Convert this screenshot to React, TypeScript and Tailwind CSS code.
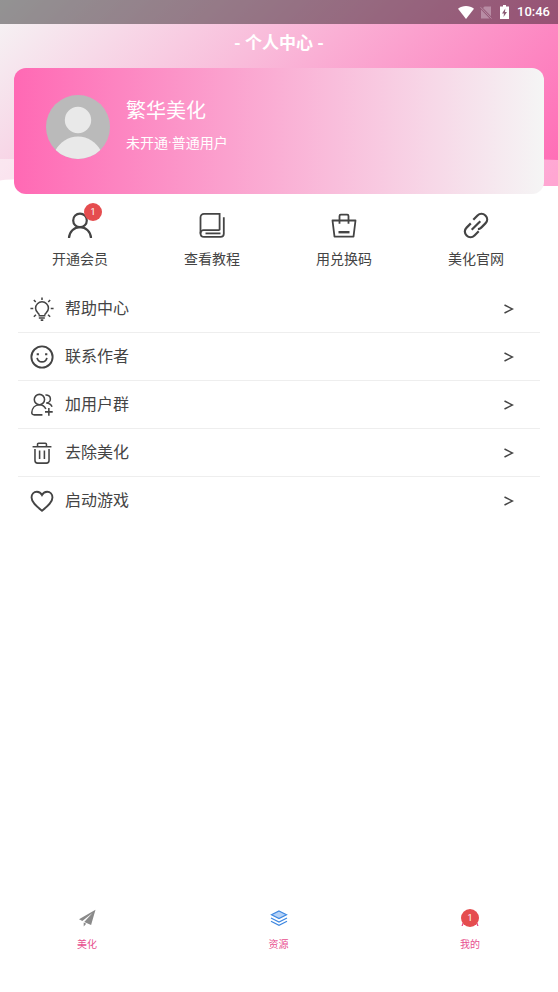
import type { ReactNode } from 'react'

interface IconProps {
  className?: string
  children: ReactNode
}

interface Item {
  label: string
  icon: ReactNode
  badge?: number
}

function LineIcon({ className = 'size-7', children }: IconProps) {
  return (
    <svg
      viewBox="0 0 28 28"
      className={className}
      fill="none"
      stroke="currentColor"
      strokeWidth="1.8"
      aria-hidden="true"
    >
      {children}
    </svg>
  )
}

const SHORTCUTS: Item[] = [
  {
    label: '开通会员',
    badge: 1,
    icon: (
      <LineIcon>
        <circle cx="14" cy="9.4" r="6.8" strokeWidth="2.2" />
        <path d="M3 27c.3-6.200 5-10.800 11-10.800S24.700 20.800 25 27" strokeWidth="2.200" />
      </LineIcon>
    ),
  },
  {
    label: '查看教程',
    icon: (
      <LineIcon>
        <path d="M21.600 19.200V2.900H6a3.500 3.500 0 0 0-3.500 3.500v16" />
        <path d="M21.600 19.200H5.500a3 3 0 0 0-3 3c0 2.200 1.300 3.700 3.500 3.700h16.500c2 0 3.300-1.200 3.300-3.200V6.300" />
        <path d="M7.500 22.400h15" />
      </LineIcon>
    ),
  },
  {
    label: '用兑换码',
    icon: (
      <LineIcon>
        <path d="M2.500 9.500h23l-2 16.100h-19z" strokeLinejoin="round" />
        <path d="M9.500 12.800V5c0-.8.500-1.300 1.300-1.300h6.400c.8 0 1.300.5 1.300 1.300v7.800" />
        <path d="M8.500 21.200h11" strokeWidth="2.400" />
      </LineIcon>
    ),
  },
  {
    label: '美化官网',
    icon: (
      <LineIcon>
        <path
          d="M11.300 8.700l4.200-4.200c2.400-2.400 5.600-2.300 7.900 0 2.300 2.300 2.400 5.500 0 7.900l-4.200 4.200c-1 1-2 1.500-3.300 1.600M16.700 20.300l-4.200 4.200c-2.400 2.400-5.600 2.300-7.900 0-2.300-2.300-2.400-5.500 0-7.900l4.200-4.200M9.700 18.800l8.600-8.600"
          strokeWidth="2.200"
        />
      </LineIcon>
    ),
  },
]

const MENU: Item[] = [
  {
    label: '帮助中心',
    icon: (
      <LineIcon className="size-6">
        <path d="M10.800 20.800c-.3-1.600-4.300-3.300-4.300-7.700a7.500 7.500 0 0 1 15 0c0 4.400-4 6.100-4.300 7.700" />
        <path d="M14 .5v3M4.500 3.500l2.200 2.300M23.500 3.500l-2.200 2.300M.5 13.300h3.300M24.200 13.300h3.300M4.500 23l2.400-2.300M23.500 23l-2.400-2.300" />
        <path d="M10 21.800h8M10.300 24.400h7M12.500 27h3" />
      </LineIcon>
    ),
  },
  {
    label: '联系作者',
    icon: (
      <LineIcon className="size-6">
        <circle cx="14" cy="14" r="12.400" strokeWidth="2.200" />
        <path d="M8.300 15c.6 3 2.800 4.700 5.700 4.700s5.100-1.700 5.700-4.700" strokeWidth="2" />
        <path d="M7.800 10.800h2.600M17.600 10.800h2.600" strokeWidth="2.400" />
      </LineIcon>
    ),
  },
  {
    label: '加用户群',
    icon: (
      <LineIcon className="size-6">
        <circle cx="11" cy="7.600" r="6" />
        <path d="M14.500 25.500h-9.500c-2 0-3-1-2.900-2.700.3-5.200 3.700-9.200 8.900-9.200 3.700 0 6.200 2 7.500 5" />
        <path d="M18 2.300c3.400-.3 5.800 1.800 5.800 4.600 0 2.700-2.200 4.700-4.900 4.800 3.700.3 5.900 1.800 6.800 4.300" />
        <path d="M22 17.500v9M17.500 22h9" />
      </LineIcon>
    ),
  },
  {
    label: '去除美化',
    icon: (
      <LineIcon className="size-6">
        <path d="M3 6.800h22M8.800 6.500V3.900c0-.8.500-1.300 1.300-1.300h7.800c.8 0 1.300.5 1.300 1.300v2.600" />
        <path d="M5.800 9.300v13.500c0 2 1 3 3 3h10.400c2 0 3-1 3-3V9.300M11.200 11v10M16.800 11v10" />
      </LineIcon>
    ),
  },
  {
    label: '启动游戏',
    icon: (
      <LineIcon className="size-6">
        <path
          d="M14 25.300C8 20.500 1.800 15.800 1.800 9.900c0-3.800 2.700-6.700 6.200-6.700 2.600 0 4.800 1.400 6 3.800 1.200-2.400 3.400-3.800 6-3.800 3.500 0 6.200 2.900 6.200 6.700 0 5.900-6.200 10.600-12.200 15.400z"
          strokeWidth="2.200"
        />
      </LineIcon>
    ),
  },
]

const TABS: Item[] = [
  {
    label: '美化',
    icon: (
      <svg viewBox="0 0 18 18" className="size-[18px]" fill="#8a8a8a" aria-hidden="true">
        <path d="M17.500.8L1 10.300l3.300 1.600L14.500 4l-8.300 8.900 6.900 3.100zM5.700 13.600v4l2.500-2.900z" />
      </svg>
    ),
  },
  {
    label: '资源',
    icon: (
      <svg
        viewBox="0 0 18 18"
        className="size-[18px]"
        fill="none"
        stroke="#3d87e0"
        strokeWidth="1.200"
        aria-hidden="true"
      >
        <path d="M9 2l7.500 3.800L9 9.600 1.500 5.800z" fill="#b5d2f7" />
        <path d="M1 9l8 4.100L17 9M1 12.300l8 4.100 8-4.100" />
      </svg>
    ),
  },
  {
    label: '我的',
    badge: 1,
    icon: (
      <svg
        viewBox="0 0 18 18"
        className="size-[18px]"
        fill="none"
        stroke="#e8508f"
        strokeWidth="1.400"
        aria-hidden="true"
      >
        <circle cx="9" cy="6" r="4" />
        <path d="M1.200 17c.4-4 3.600-6.500 7.800-6.500s7.400 2.500 7.800 6.500" />
      </svg>
    ),
  },
]

function Badge({ count, className }: { count: number; className: string }) {
  return (
    <span
      className={`absolute flex size-[18px] items-center justify-center rounded-full bg-[#e54d4f] text-[9px] leading-none text-white ${className}`}
    >
      {count}
    </span>
  )
}

function StatusBar() {
  return (
    <div className="flex h-6 items-center justify-end bg-black/40 pr-2 text-white">
      <svg viewBox="0 0 16 13" className="mr-1.5 h-[13px] w-4" fill="currentColor" aria-hidden="true">
        <path d="M8 13L0 2.700C2.300 1 5 0 8 0s5.700 1 8 2.700z" />
      </svg>
      <svg viewBox="0 0 12 13" className="mr-2 h-[13px] w-3" aria-hidden="true">
        <path d="M4.500.5H11v9.700L3 2zM1 3.500l8.700 9H1z" fill="#b88ca4" />
        <path d="M.5 1.200l11 11.300" stroke="#b88ca4" strokeWidth="1" />
      </svg>
      <svg viewBox="0 0 9 14" className="mr-2 h-3.5 w-[9px]" aria-hidden="true">
        <path d="M3 0h3v1.500h3V14H0V1.500h3z" fill="currentColor" />
        <path d="M5.300 3.500L2 8.500h2l-.5 3.500L7 7H5z" fill="#8d5c77" />
      </svg>
      <time className="text-[13px] leading-6 font-medium">10:46</time>
    </div>
  )
}

function ProfileCard() {
  return (
    <section className="mx-3.5 flex h-[126px] rounded-xl bg-linear-to-r/srgb from-[#ff69b4] to-[#f5f5f5] pt-[27px] pl-8 text-white">
      <svg viewBox="0 0 64 64" className="size-16 rounded-full" aria-hidden="true">
        <rect width="64" height="64" fill="#bababa" />
        <circle cx="32" cy="25" r="13.200" fill="#e9e9e9" />
        <path d="M9 56c5-9 13-14.500 23-14.500S50 47 55 56v8H9z" fill="#e9e9e9" />
      </svg>
      <div className="ml-4">
        <h2 className="text-xl leading-8">繁华美化</h2>
        <p className="mt-1.5 text-sm leading-5">未开通·普通用户</p>
      </div>
    </section>
  )
}

function Banner() {
  return (
    <div className="relative">
      <div className="absolute inset-x-0 top-0 h-[186px] bg-[linear-gradient(135deg,#f5f5f5,#ff69b4)]">
        {/* waves along the bottom edge */}
        <svg
          viewBox="0 0 558 27"
          preserveAspectRatio="none"
          className="absolute bottom-0 left-0 h-[27px] w-full"
          fill="#fff"
          aria-hidden="true"
        >
          <path d="M0 0h20L120 9 300 20 440 6 530 0l28 1v26H0z" opacity=".4" />
          <path d="M0 21.500Q10 20 24 20L140 24 300 27H0z" />
        </svg>
      </div>
      <div className="relative">
        <StatusBar />
        <h1 className="h-11 text-center text-[17px] leading-[38px] font-bold text-white">
          - 个人中心 -
        </h1>
        <ProfileCard />
      </div>
    </div>
  )
}

export default function App() {
  return (
    <div className="flex min-h-screen flex-col bg-white font-[Roboto,'Noto_Sans_CJK_SC',sans-serif] text-[#444]">
      <Banner />

      <div className="grid grid-cols-4 pt-[17px] pr-4 pl-3.5">
        {SHORTCUTS.map((item) => (
          <button key={item.label} type="button" className="flex flex-col items-center">
            <span className="relative">
              {item.icon}
              {item.badge && <Badge count={item.badge} className="-top-2 -right-2" />}
            </span>
            <span className="mt-2.5 text-sm leading-5">{item.label}</span>
          </button>
        ))}
      </div>

      <ul className="mt-4 px-[18px]">
        {MENU.map((item) => (
          <li key={item.label} className="border-b border-[#eee] last:border-b-0">
            <button type="button" className="flex h-[47px] w-full items-center pr-[26px] pl-3">
              {item.icon}
              <span className="ml-[11px] text-base">{item.label}</span>
              <svg
                viewBox="0 0 10 12"
                className="ml-auto h-3 w-2.5"
                fill="none"
                stroke="currentColor"
                strokeWidth="1.500"
                aria-hidden="true"
              >
                <path d="M.5 2L8.500 6l-8 4" />
              </svg>
            </button>
          </li>
        ))}
      </ul>

      <nav className="mt-auto flex justify-between pr-16 pb-[39px] pl-[63px]">
        {TABS.map((tab) => (
          <a key={tab.label} href="#" className="flex w-12 flex-col items-center">
            <span className="relative">
              {tab.icon}
              {tab.badge && <Badge count={tab.badge} className="inset-0" />}
            </span>
            <span className="mt-2.5 text-[10px] leading-4 text-[#e8508f]">{tab.label}</span>
          </a>
        ))}
      </nav>
    </div>
  )
}
